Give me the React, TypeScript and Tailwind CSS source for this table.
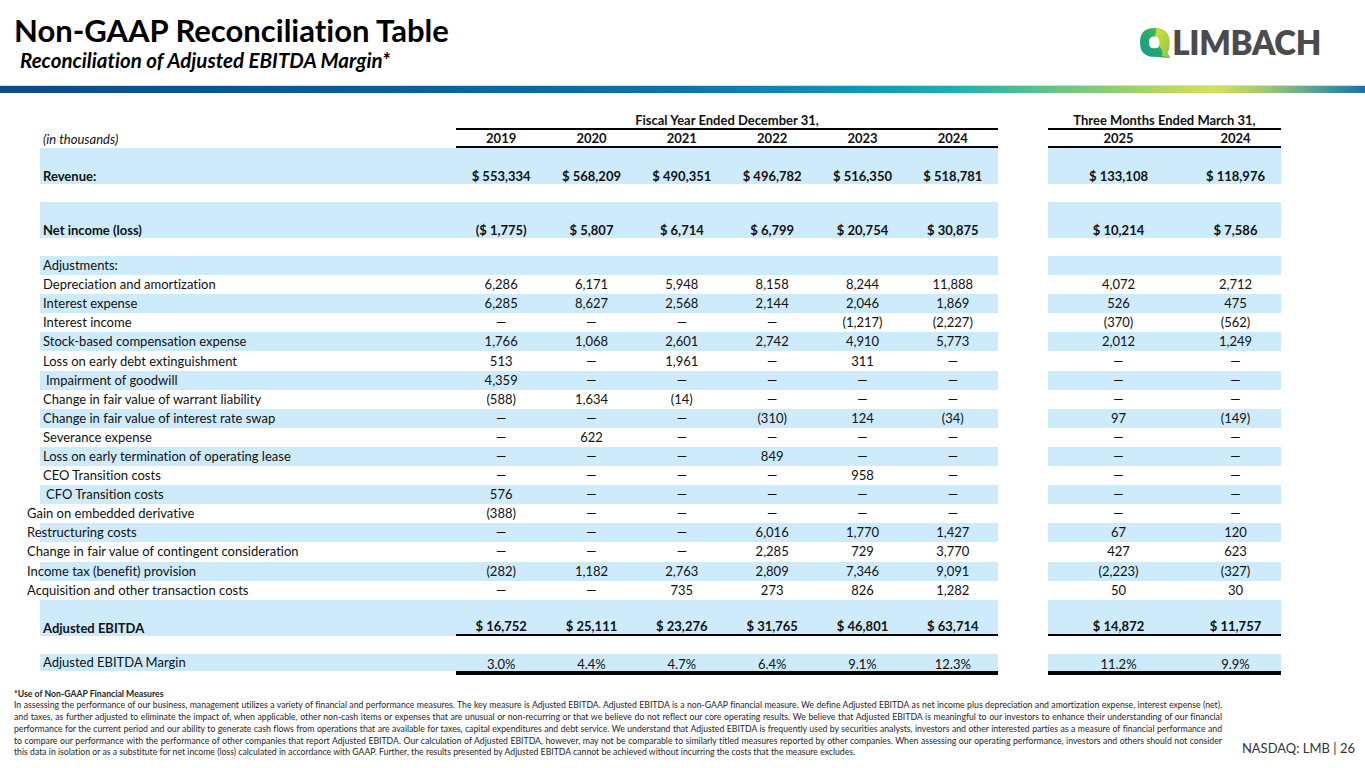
import React from "react";

type Row = {
  label: string;
  vals: string[];
  shift?: "in" | "out";
};

const ADJ_ROWS: Row[] = [
  { label: "Adjustments:", vals: ["", "", "", "", "", "", "", ""] },
  { label: "Depreciation and amortization", vals: ["6,286", "6,171", "5,948", "8,158", "8,244", "11,888", "4,072", "2,712"] },
  { label: "Interest expense", vals: ["6,285", "8,627", "2,568", "2,144", "2,046", "1,869", "526", "475"] },
  { label: "Interest income", vals: ["—", "—", "—", "—", "(1,217)", "(2,227)", "(370)", "(562)"] },
  { label: "Stock-based compensation expense", vals: ["1,766", "1,068", "2,601", "2,742", "4,910", "5,773", "2,012", "1,249"] },
  { label: "Loss on early debt extinguishment", vals: ["513", "—", "1,961", "—", "311", "—", "—", "—"] },
  { label: "Impairment of goodwill", vals: ["4,359", "—", "—", "—", "—", "—", "—", "—"], shift: "in" },
  { label: "Change in fair value of warrant liability", vals: ["(588)", "1,634", "(14)", "—", "—", "—", "—", "—"] },
  { label: "Change in fair value of interest rate swap", vals: ["—", "—", "—", "(310)", "124", "(34)", "97", "(149)"] },
  { label: "Severance expense", vals: ["—", "622", "—", "—", "—", "—", "—", "—"] },
  { label: "Loss on early termination of operating lease", vals: ["—", "—", "—", "849", "—", "—", "—", "—"] },
  { label: "CEO Transition costs", vals: ["—", "—", "—", "—", "958", "—", "—", "—"] },
  { label: "CFO Transition costs", vals: ["576", "—", "—", "—", "—", "—", "—", "—"], shift: "in" },
  { label: "Gain on embedded derivative", vals: ["(388)", "—", "—", "—", "—", "—", "—", "—"], shift: "out" },
  { label: "Restructuring costs", vals: ["—", "—", "—", "6,016", "1,770", "1,427", "67", "120"], shift: "out" },
  { label: "Change in fair value of contingent consideration", vals: ["—", "—", "—", "2,285", "729", "3,770", "427", "623"], shift: "out" },
  { label: "Income tax (benefit) provision", vals: ["(282)", "1,182", "2,763", "2,809", "7,346", "9,091", "(2,223)", "(327)"], shift: "out" },
  { label: "Acquisition and other transaction costs", vals: ["—", "—", "735", "273", "826", "1,282", "50", "30"], shift: "out" },
];

const SHADE = "bg-[#cdebfb]";

const FOOTNOTE = [
  "In assessing the performance of our business, management utilizes a variety of financial and performance measures. The key measure is Adjusted EBITDA. Adjusted EBITDA is a non-GAAP financial measure. We define Adjusted EBITDA as net income plus depreciation and amortization expense, interest expense (net),",
  "and taxes, as further adjusted to eliminate the impact of, when applicable, other non-cash items or expenses that are unusual or non-recurring or that we believe do not reflect our core operating results. We believe that Adjusted EBITDA is meaningful to our investors to enhance their understanding of our financial",
  "performance for the current period and our ability to generate cash flows from operations that are available for taxes, capital expenditures and debt service. We understand that Adjusted EBITDA is frequently used by securities analysts, investors and other interested parties as a measure of financial performance and",
  "to compare our performance with the performance of other companies that report Adjusted EBITDA. Our calculation of Adjusted EBITDA, however, may not be comparable to similarly titled measures reported by other companies. When assessing our operating performance, investors and others should not consider",
];

function LimbachLogo() {
  return (
    <div className="flex items-center gap-[1px]">
      <svg width="32" height="32" viewBox="0 0 30 30">
        <defs>
          <linearGradient id="lgA" x1="0" y1="1" x2="1" y2="0">
            <stop offset="0" stopColor="#0f9a94" />
            <stop offset="0.5" stopColor="#2aa86e" />
            <stop offset="1" stopColor="#7cc243" />
          </linearGradient>
          <linearGradient id="lgB" x1="0" y1="0" x2="1" y2="1">
            <stop offset="0" stopColor="#d7e23a" />
            <stop offset="1" stopColor="#8cc63f" />
          </linearGradient>
        </defs>
        <path
          d="M14.5 1 C5.5 1 1 5.5 1 14.5 C1 23.5 5.5 28 14.5 28 L29 29 L26.5 24 C28 21.5 28.5 18.5 28.5 14.5 C28.5 5.5 23.5 1 14.5 1 Z M14.5 9 C11 9 9.5 10.5 9.5 14.5 C9.5 18.5 11 20 14.5 20 C18 20 19.5 18.5 19.5 14.5 C19.5 10.5 18 9 14.5 9 Z"
          fill="url(#lgA)"
          fillRule="evenodd"
        />
        <path
          d="M16 1.2 C24 2 28.5 6.5 28.5 14.5 C28.5 18.5 28 21.5 26.5 24 L29 29 L21 27 C23 25 22 21 19 18.5 C19.4 17.5 19.5 16.2 19.5 14.5 C19.5 10.5 18 9 14.5 9 C16 6 16.5 3.5 16 1.2 Z"
          fill="url(#lgB)"
        />
      </svg>
      <span className="text-[33px] leading-none font-extrabold tracking-[-0.3px] text-[#4b4b4d]">LIMBACH</span>
    </div>
  );
}

function ValueCells({
  vals,
  className = "",
  cellClass = "",
}: {
  vals: string[];
  className?: string;
  cellClass?: string;
}) {
  return (
    <>
      <div className={`grid h-full w-[542px] grid-cols-6 ${className}`}>
        {vals.slice(0, 6).map((v, i) => (
          <div key={i} className={`flex h-full justify-center ${cellClass}`}>
            {v}
          </div>
        ))}
      </div>
      <div className="w-[50px] shrink-0" />
      <div className={`flex h-full w-[233px] shrink-0 pl-[12px] ${className}`}>
        {vals.slice(6).map((v, i) => (
          <div key={i} className={`flex h-full w-[117px] shrink-0 justify-center ${cellClass}`}>
            {v}
          </div>
        ))}
      </div>
    </>
  );
}

function BandRow({ label, vals, underline }: { label: string; vals: string[]; underline?: boolean }) {
  return (
    <div className="flex h-[36px] font-bold">
      <div className={`flex h-full w-[416px] shrink-0 items-end pb-[1px] pl-[3px] ${SHADE}`}>{label}</div>
      <ValueCells
        vals={vals}
        className={`${SHADE} ${underline ? "border-b-2 border-black" : ""}`}
        cellClass="items-end pb-[1px]"
      />
    </div>
  );
}

export default function App() {
  return (
    <div className="relative h-[768px] w-[1365px] overflow-hidden bg-white font-['Lato','Liberation_Sans',sans-serif] text-[#111] [font-variant-ligatures:no-common-ligatures]">
      {/* header */}
      <div className="flex h-[85px] items-start justify-between">
        <div className="pl-[14px] pt-[14px]">
          <h1 className="text-[31px] leading-[32px] font-bold text-black">Non-GAAP Reconciliation Table</h1>
          <p className="mt-[3px] pl-[6px] text-[20.5px] leading-[22px] font-bold italic text-black">
            Reconciliation of Adjusted EBITDA Margin*
          </p>
        </div>
        <div className="pr-[44px] pt-[26px]">
          <LimbachLogo />
        </div>
      </div>
      <div className="h-[1px] bg-[#bfe3f5]" />
      <div className="h-[7px] bg-[linear-gradient(to_right,#0a4c86_0%,#0c5f9c_30%,#0e74aa_50%,#1299b6_64%,#1fb0ae_70%,#63c48a_77%,#a7d466_84%,#d6e25a_89%,#9cc574_93%,#4a9a98_97%,#1f6fa6_100%)]" />

      {/* table */}
      <div className="mt-[19px] pl-[40px] text-[13px] leading-none">
        <div className="flex h-[18px] font-bold">
          <div className="w-[416px] shrink-0" />
          <div className="flex h-full w-[542px] items-center justify-center border-b-2 border-black">
            Fiscal Year Ended December 31,
          </div>
          <div className="w-[50px] shrink-0" />
          <div className="flex h-full w-[233px] shrink-0 items-center justify-center border-b-2 border-black">
            Three Months Ended March 31,
          </div>
        </div>
        <div className="flex h-[18px] items-center">
          <div className="w-[416px] shrink-0 pl-[3px] italic">(in thousands)</div>
          <ValueCells
            vals={["2019", "2020", "2021", "2022", "2023", "2024", "2025", "2024"]}
            className="items-center border-b-2 border-black font-bold"
            cellClass="items-center"
          />
        </div>

        <BandRow label="Revenue:" vals={["$ 553,334", "$ 568,209", "$ 490,351", "$ 496,782", "$ 516,350", "$ 518,781", "$ 133,108", "$ 118,976"]} />
        <div className="h-[18px]" />
        <BandRow label="Net income (loss)" vals={["($ 1,775)", "$ 5,807", "$ 6,714", "$ 6,799", "$ 20,754", "$ 30,875", "$ 10,214", "$ 7,586"]} />
        <div className="h-[18px]" />

        {ADJ_ROWS.map((row, idx) => {
          const bg = idx % 2 === 0 ? SHADE : "";
          const shift =
            row.shift === "in" ? "pl-[6px]" : row.shift === "out" ? "-ml-[13px] pl-0" : "pl-[3px]";
          return (
            <div key={row.label} className="flex h-[19.1px] items-center">
              <div className={`flex h-full w-[416px] shrink-0 items-center ${bg}`}>
                <span className={`whitespace-nowrap ${shift}`}>{row.label}</span>
              </div>
              <ValueCells vals={row.vals} className={bg} cellClass="items-center" />
            </div>
          );
        })}

        <BandRow
          label="Adjusted EBITDA"
          underline
          vals={["$ 16,752", "$ 25,111", "$ 23,276", "$ 31,765", "$ 46,801", "$ 63,714", "$ 14,872", "$ 11,757"]}
        />
        <div className="h-[18px]" />
        <div className="flex h-[21px]">
          <div className={`flex h-[17px] w-[416px] shrink-0 items-center pl-[3px] ${SHADE}`}>Adjusted EBITDA Margin</div>
          <ValueCells
            vals={["3.0%", "4.4%", "4.7%", "6.4%", "9.1%", "12.3%", "11.2%", "9.9%"]}
            className={`${SHADE} border-b-4 border-black`}
            cellClass="items-end"
          />
        </div>
      </div>

      {/* footnote */}
      <div className="mt-[13px] flex items-end">
        <div className="ml-[14px] w-[1208px] shrink-0 text-[8.7px] leading-[11.7px] text-[#262626]">
          <div className="font-bold">*Use of Non-GAAP Financial Measures</div>
          {FOOTNOTE.map((line) => (
            <div key={line} className="whitespace-nowrap text-justify [text-align-last:justify]">
              {line}
            </div>
          ))}
          <div className="whitespace-nowrap">
            this data in isolation or as a substitute for net income (loss) calculated in accordance with GAAP. Further, the
            results presented by Adjusted EBITDA cannot be achieved without incurring the costs that the measure excludes.
          </div>
        </div>
        <div className="flex flex-1 justify-end pb-[3px] pr-[10px] text-[13px] leading-none text-[#333]">
          NASDAQ: LMB | 26
        </div>
      </div>
    </div>
  );
}
